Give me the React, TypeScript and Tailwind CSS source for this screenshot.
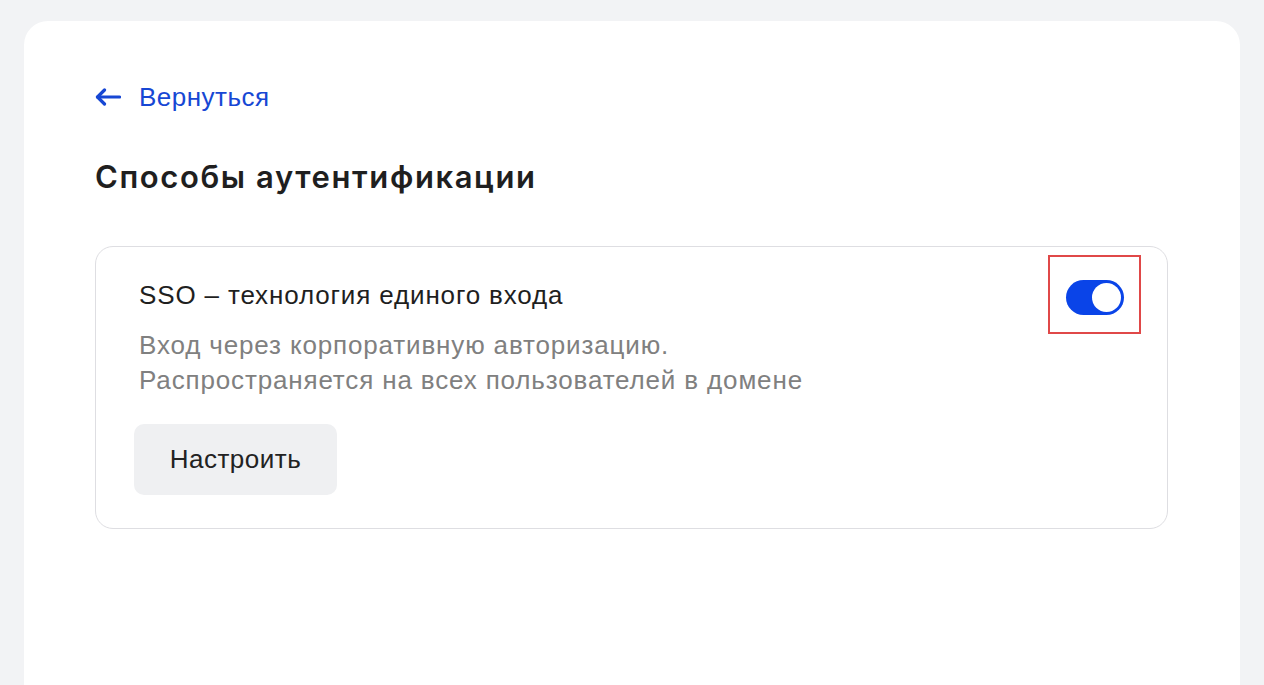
export default function App() {
  return (
    <div className="min-h-screen bg-[#f2f3f5] px-[24px] pt-[21px]" style={{ fontFamily: '"Liberation Sans", Arial, sans-serif' }}>
      <div className="min-h-[664px] rounded-t-[24px] bg-white pl-[71px] pr-[72px] pt-[59px]">
        <a href="#" className="flex items-center gap-[18px] text-[#1747d4]">
          <svg width="26" height="18" viewBox="0 0 26 18" fill="none" stroke="currentColor" strokeWidth="3.2" strokeLinecap="round" strokeLinejoin="round">
            <path d="M24.5 9H2.5" />
            <path d="M9.5 2L2.5 9l7 7" />
          </svg>
          <span className="text-[26px] leading-[34px] font-medium tracking-[0.5px]">Вернуться</span>
        </a>

        <h1
          className="mt-[44px] text-[31px] leading-[38px] font-semibold tracking-[1.6px] text-[#1f1f1f]"
          style={{ fontFamily: '"Inter", "Noto Sans", sans-serif' }}
        >
          Способы аутентификации
        </h1>

        <div className="mt-[50px] flex rounded-[18px] border border-[#dedee2] pb-[33px] pl-[43px] pr-[26px] pt-[8px]">
          <div className="flex-1 pt-[25px] tracking-[0.85px]">
            <div className="text-[26px] leading-[30px] text-[#1f1f1f]">SSO – технология единого входа</div>
            <p className="mt-[18px] text-[26px] leading-[35px] text-[#808080]">
              Вход через корпоративную авторизацию.
              <br />
              Распространяется на всех пользователей в домене
            </p>
            <button className="-ml-[5px] mt-[26px] h-[71px] w-[203px] rounded-[10px] bg-[#eff0f2] text-[26px] tracking-[0.5px] text-[#222]">
              Настроить
            </button>
          </div>
          <div className="flex h-[79px] w-[93px] items-start justify-center self-start border-2 border-[#e04848] pl-[1px] pt-[23px]">
            <div className="flex h-[35px] w-[58px] items-center justify-end rounded-full bg-[#0a44e8] p-[3px]">
              <div className="h-[29px] w-[29px] rounded-full bg-white" />
            </div>
          </div>
        </div>
      </div>
    </div>
  );
}
